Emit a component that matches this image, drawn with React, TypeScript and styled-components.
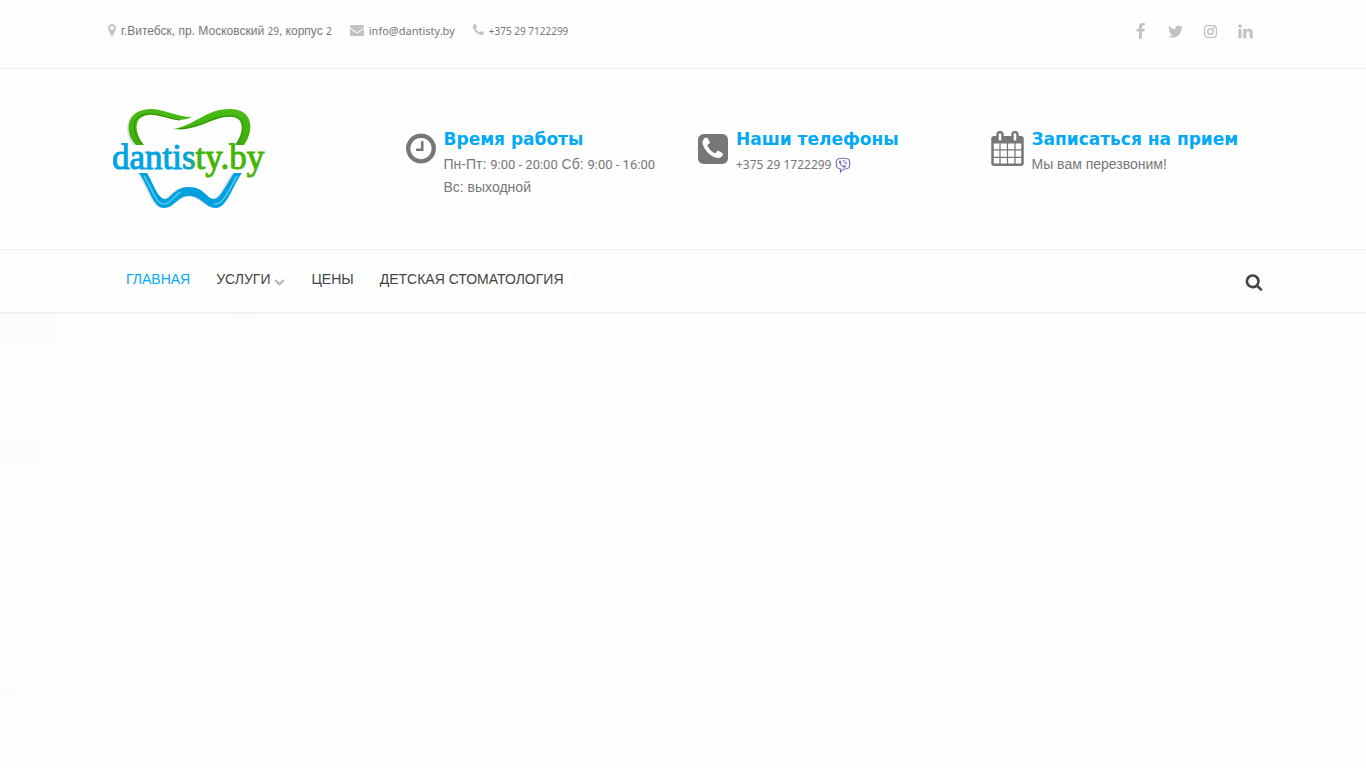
import React from 'react';
import styled, { createGlobalStyle, css } from 'styled-components';

const GlobalStyle = createGlobalStyle`
  *, *::before, *::after { box-sizing: border-box; }
  body {
    margin: 0;
    background: #fefefe;
    color: #777;
    font: 14px/23px 'Liberation Sans', Arial, sans-serif;
  }
  a { color: inherit; text-decoration: none; }
`;

const paths = {
  marker: 'M1152 640q0-106-75-181t-181-75-181 75-75 181 75 181 181 75 181-75 75-181zm256 0q0 109-33 179l-364 774q-16 33-47.5 52t-67.5 19-67.5-19-46.5-52l-365-774q-33-70-33-179 0-212 150-362t362-150 362 150 150 362z',
  envelope: 'M1792 710v794q0 66-47 113t-113 47h-1472q-66 0-113-47t-47-113v-794q44 49 101 87 362 246 497 345 57 42 92.5 65.5t94.5 48 110 24.5h2q51 0 110-24.5t94.5-48 92.5-65.5q170-123 498-345 57-39 100-87zm0-294q0 79-49 151t-122 123q-376 261-468 325-10 7-42.5 31t-54 38.5-52 32.5-57.5 27-50 9h-2q-23 0-50-9t-57.5-27-52-32.5-54-38.5-42.5-31q-91-64-262-182.5t-205-142.5q-62-42-117-115.5t-55-136.5q0-78 41.5-130t118.5-52h1472q65 0 112.5 47t47.5 113z',
  phone: 'M1600 1240q0 27-10 70.5t-21 68.5q-21 50-122 106-94 51-186 51-27 0-53-3.5t-57.5-12.5-47-14.5-55.5-20.5-49-18q-98-35-175-83-127-79-264-216t-216-264q-48-77-83-175-3-9-18-49t-20.5-55.5-14.5-47-12.5-57.5-3.5-53q0-92 51-186 56-101 106-122 25-11 68.5-21t70.5-10q14 0 21 3 18 6 53 76 11 19 30 54t35 63.5 31 53.5q3 4 17.5 25t21.5 35.5 7 28.5q0 20-28.5 50t-62 55-62 53-28.5 46q0 9 5 22.5t8.5 20.5 14 24 11.5 19q76 137 174 235t235 174q2 1 19 11.5t24 14 20.5 8.5 22.5 5q18 0 46-28.5t53-62 55-62 50-28.5q14 0 28.5 7t35.5 21.5 25 17.5q25 15 53.5 31t63.5 35 54 30q70 35 76 53 3 7 3 21z',
  clock: 'M1024 544v448q0 14-9 23t-23 9h-320q-14 0-23-9t-9-23v-64q0-14 9-23t23-9h224v-352q0-14 9-23t23-9h64q14 0 23 9t9 23zm416 352q0-148-73-273t-198-198-273-73-273 73-198 198-73 273 73 273 198 198 273 73 273-73 198-198 73-273zm224 0q0 209-103 385.5t-279.5 279.5-385.5 103-385.5-103-279.5-279.5-103-385.5 103-385.5 279.5-279.5 385.5-103 385.5 103 279.5 279.5 103 385.5z',
  calendar: 'M192 1664h288v-288h-288v288zm352 0h320v-288h-320v288zm-352-352h288v-320h-288v320zm352 0h320v-320h-320v320zm-352-384h288v-288h-288v288zm736 736h320v-288h-320v288zm-384-736h320v-288h-320v288zm768 736h288v-288h-288v288zm-384-352h320v-320h-320v320zm-352-864v-288q0-13-9.5-22.5t-22.5-9.5h-64q-13 0-22.5 9.5t-9.5 22.5v288q0 13 9.5 22.5t22.5 9.5h64q13 0 22.5-9.5t9.5-22.5zm736 864h288v-320h-288v320zm-384-384h320v-288h-320v288zm384 0h288v-288h-288v288zm32-480v-288q0-13-9.5-22.5t-22.5-9.5h-64q-13 0-22.5 9.5t-9.5 22.5v288q0 13 9.5 22.5t22.5 9.5h64q13 0 22.5-9.5t9.5-22.5zm384-64v1280q0 52-38 90t-90 38h-1408q-52 0-90-38t-38-90v-1280q0-52 38-90t90-38h128v-96q0-66 47-113t113-47h64q66 0 113 47t47 113v96h384v-96q0-66 47-113t113-47h64q66 0 113 47t47 113v96h128q52 0 90 38t38 90z',
  facebook: 'M1343 12v264h-157q-86 0-116 36t-30 108v189h293l-39 296h-254v759h-306v-759h-255v-296h255v-218q0-186 104-288.5t277-102.5q147 0 228 12z',
  twitter: 'M1684 408q-67 98-162 167 1 14 1 42 0 130-38 259.5t-115.5 248.5-184.5 210.5-258 146-323 54.5q-271 0-496-145 35 4 78 4 225 0 401-138-105-2-188-64.5t-114-159.5q33 5 61 5 43 0 85-11-112-23-185.5-111.5t-73.5-205.5v-4q68 38 146 41-66-44-105-115t-39-154q0-88 44-163 121 149 294.5 238.5t371.5 99.5q-8-38-8-74 0-134 94.5-228.5t228.5-94.5q140 0 236 102 109-21 205-78-37 115-142 178 93-10 186-50z',
  linkedin: 'M477 625v991h-330v-991h330zm21-306q1 73-50.5 122t-135.5 49h-2q-82 0-132-49t-50-122q0-74 51.5-122.5t134.5-48.5 133 48.5 51 122.5zm1166 729v568h-329v-530q0-105-40.5-164.5t-126.5-59.5q-63 0-105.5 34.5t-63.5 85.5q-11 30-11 81v553h-329q2-399 2-647t-1-296l-1-48h329v144h-2q20-32 41-56t56.5-52 87-43.5 114.5-15.5q171 0 275 113.5t104 332.5z',
  search: 'M1216 832q0-185-131.5-316.5t-316.5-131.5-316.5 131.5-131.5 316.5 131.5 316.5 316.5 131.5 316.5-131.5 131.5-316.5zm512 832q0 52-38 90t-90 38q-54 0-90-38l-343-342q-179 124-399 124-143 0-273.5-55.5t-225-150-150-225-55.5-273.5 55.5-273.5 150-225 225-150 273.5-55.5 273.5 55.5 225 150 150 225 55.5 273.5q0 220-124 399l343 343q37 37 37 90z',
  chevron: 'M1683 808l-742 741q-19 19-45 19t-45-19l-742-741q-19-19-19-45.5t19-45.5l166-165q19-19 45-19t45 19l531 531 531-531q19-19 45-19t45 19l166 165q19 19 19 45.5t-19 45.5z',
};

const Svg = styled.svg`
  display: block;
  flex: none;
  fill: currentColor;
`;

interface IconProps {
  name: keyof typeof paths;
  size: number;
  /* horizontal part of the 1792-unit grid that the glyph takes up */
  from?: number;
  span?: number;
}

const Icon = ({ name, size, from = 0, span = 1792 }: IconProps) => (
  <Svg
    viewBox={`${from} 0 ${span} 1792`}
    width={Math.round((size * span) / 1792)}
    height={size}
    aria-hidden="true"
  >
    <path d={paths[name]} />
  </Svg>
);

const InstagramIcon = () => (
  <Svg viewBox="0 0 17 17" width={17} height={17} aria-hidden="true">
    <rect x="2.6" y="2.6" width="11.800" height="11.800" rx="3.200" fill="none" stroke="currentColor" strokeWidth="1.300" />
    <circle cx="8.500" cy="8.500" r="2.800" fill="none" stroke="currentColor" strokeWidth="1.400" />
    <circle cx="12" cy="5" r="0.900" />
  </Svg>
);

const PhoneSquareIcon = () => (
  <Svg viewBox="0 -3 30 36" width={30} height={36} aria-hidden="true">
    <rect width="30" height="30" rx="5.6" />
    <path d={paths.phone} fill="#fefefe" transform="translate(1.8 1.8) scale(.01445)" />
  </Svg>
);

const ViberIcon = () => (
  <Svg viewBox="0 0 16 16" width={16} height={16} aria-hidden="true">
    <path
      d="M8 1.200c3.500 0 5 .4 5.900 1.500 1.100 1.400 1.100 6 .1 7.600-.9 1.500-2.600 1.900-5.900 1.900L5.500 15v-3.100c-2-.3-2.900-.8-3.500-1.700-1-1.500-1-6 0-7.400C2.800 1.600 4.500 1.200 8 1.200z"
      fill="none"
      stroke="#7169b3"
      strokeWidth="1.100"
    />
    <path d="M5 3.600c.8.400 1.200 1 1.300 1.700 0 .5-.6.700-.5 1.200.4 1.200 1.200 2 2.300 2.400.6.100.7-.6 1.300-.6.700.2 1.300.6 1.600 1.200-.2.800-.8 1.300-1.500 1.200C6.700 9.800 4.600 7.600 3.900 5c0-.8.500-1.200 1.100-1.400z" fill="#665cac" />
    <path d="M8 3.300c2.400.1 3.700 1.500 3.700 3.900M8.300 4.900c1.200.1 1.900.8 1.900 2" fill="none" stroke="#665cac" strokeWidth=".7" strokeLinecap="round" />
  </Svg>
);

const Container = styled.div`
  display: flex;
  width: 100%;
  max-width: 1170px;
  margin: 0 auto;
`;

const TopBar = styled.div`
  border-bottom: 1px solid #f1f1f1;
`;

const TopBarRow = styled(Container)`
  justify-content: space-between;
  padding: 20px 14px 26px 10px;
`;

const Contacts = styled.address`
  display: flex;
  gap: 18px;
  font-size: 12px;
  line-height: 22px;
  font-style: normal;
`;

const Contact = styled.span`
  display: flex;
  gap: 5px;

  svg { margin-top: 3px; color: #c2c2c2; }
`;

/* Latin letters and digits are set in another face beside the Cyrillic */
const Latin = styled.span<{ $size?: number }>`
  font-family: 'Noto Sans', 'Open Sans', sans-serif;
  font-size: ${({ $size = 11 }) => $size}px;
`;

const Hours = styled.time`
  font-family: Roboto, sans-serif;
  font-size: 13px;
`;

const Socials = styled.div`
  display: flex;
  align-items: center;
  gap: 18px;
  height: 22px;
  padding-top: 1px;
  color: #c2c2c2;
`;

const Header = styled.header`
  border-bottom: 1px solid #f1f1f1;
`;

const Column = styled.div`
  flex: 1 1 25%;
  min-width: 0;
  padding: 40px 15px;
`;

const InfoColumn = styled(Column)`
  display: flex;
  gap: 8px;
  padding: 57px 0 50px 15px;

  > svg { margin-top: 5px; }
`;

const InfoTitle = styled.h3`
  margin: 0 0 1px;
  color: #03a9f4;
  font: 700 17px/26px 'DejaVu Sans', sans-serif;
  white-space: nowrap;
`;

const InfoText = styled.p`
  display: flex;
  flex-wrap: wrap;
  gap: 0 4px;
  margin: 0;

  svg { margin-top: 4px; }
`;

const Line = styled.span`
  white-space: nowrap;
`;

const Nav = styled.nav`
  border-bottom: 2px solid #f1f1f1;
`;

const NavRow = styled(Container)`
  justify-content: space-between;
  padding: 18px 5px 21px 28px;
`;

const Menu = styled.ul`
  display: flex;
  flex-wrap: wrap;
  gap: 26px;
  margin: 0;
  padding: 0;
  list-style: none;
`;

const MenuLink = styled.a<{ $active?: boolean }>`
  display: flex;
  gap: 4px;
  color: #444;
  ${({ $active }) => $active && css`color: #03a9f4;`}

  svg { margin-top: 8px; color: #b5b5b5; }
`;

const SearchButton = styled.button`
  padding: 5px 0 0;
  border: 0;
  background: none;
  color: #444;
  cursor: pointer;
`;

/* Empty slider stage with its barely tinted blocks */
const Hero = styled.main`
  min-height: 454px;
  background:
    linear-gradient(#fcfcfc, #fcfcfc) 0 0 / 58px 32px,
    linear-gradient(#fdfdfd, #fdfdfd) 228px 0 / 28px 15px,
    linear-gradient(#fcfcfc, #fcfcfc) 0 125px / 44px 24px,
    linear-gradient(#fdfdfd, #fdfdfd) 0 252px / 28px 12px,
    linear-gradient(#fcfcfc, #fcfcfc) 0 375px / 14px 7px,
    #fefefe;
  background-repeat: no-repeat;
`;

const Logo = () => (
  <Svg viewBox="0 0 154 100" width={154} height={100} role="img" aria-label="dantisty.by">
    <defs>
      <linearGradient id="leaf" x1="0" y1="0" x2="0" y2="1">
        <stop offset="0" stopColor="#4abb14" />
        <stop offset="1" stopColor="#3dae06" />
      </linearGradient>
      <linearGradient id="word" gradientUnits="userSpaceOnUse" x1="74" y1="0" x2="86" y2="0">
        <stop offset="0" stopColor="#00a3e0" />
        <stop offset="1" stopColor="#43b50a" />
      </linearGradient>
    </defs>
    <g fill="#dfe2e4" transform="translate(-2 1)">
      <path d="M22 35C13 24 12 2 36 0h10L26 10c-4 8-1 18 5 25z" />
      <path d="M26 63h8c6 10 11 26 18 26 6 0 9-12 24-12s18 12 25 12c6 0 12-14 20-26h8c-9 12-15 35-26 35-10 0-15-12-27-12-11 0-15 12-25 12C40 98 36 77 26 63z" />
    </g>
    <path fill="url(#leaf)" d="M23 36C12 25 11 1 37 0c14 0 27 8 42 8-4 2-9 3-13 3C54 10 44 5 35 6c-16 2-13 19-4 30z" />
    <path fill="url(#leaf)" d="M60 20C82 17 92 0 117 0c23 0 25 21 14 36h-9c9-12 10-27-3-28-18-2-32 15-59 12z" />
    <path fill="none" stroke="#2f8d06" strokeWidth="1" d="M29 35C17 20 19 7 34 5c11-1 22 5 33 6M66 20c24-2 34-14 53-13 13 1 14 15 5 28" />
    <path fill="#00a0df" d="M26 64h8c6 10 11 26 18 26 6 0 9-12 24-12s18 12 25 12c6 0 12-14 20-26h8c-9 12-15 35-26 35-10 0-15-12-27-12-11 0-15 12-25 12C40 99 36 78 26 64z" />
    <path fill="none" stroke="#55c6f2" strokeWidth="1.500" d="M31 67c9 14 12 29 21 28 7-1 9-9 16-12M101 95c10 1 15-15 23-28" />
    <text x="-1" y="60" fontFamily="'Liberation Serif', serif" fontSize="35" fill="url(#word)" stroke="url(#word)" strokeWidth="1">
      dantisty.by
    </text>
  </Svg>
);

export default function App() {
  return (
    <>
      <GlobalStyle />
      <TopBar>
        <TopBarRow>
          <Contacts>
            <Contact>
              <Icon name="marker" size={14} from={384} span={1024} />
              <span>г.Витебск, пр. Московский <Latin $size={10}>29</Latin>, корпус <Latin $size={10}>2</Latin></span>
            </Contact>
            <Contact>
              <Icon name="envelope" size={14} />
              <a href="mailto:info@dantisty.by"><Latin>info@dantisty.by</Latin></a>
            </Contact>
            <Contact>
              <Icon name="phone" size={14} from={192} span={1408} />
              <a href="tel:+375297122299"><Latin $size={10}>+375 29 7122299</Latin></a>
            </Contact>
          </Contacts>
          <Socials>
            <a href="#facebook" aria-label="Facebook"><Icon name="facebook" size={17} /></a>
            <a href="#twitter" aria-label="Twitter"><Icon name="twitter" size={17} /></a>
            <a href="#instagram" aria-label="Instagram"><InstagramIcon /></a>
            <a href="#linkedin" aria-label="LinkedIn"><Icon name="linkedin" size={17} /></a>
          </Socials>
        </TopBarRow>
      </TopBar>

      <Header>
        <Container>
          <Column>
            <a href="#home"><Logo /></a>
          </Column>
          <InfoColumn>
            <Icon name="clock" size={35} from={128} span={1536} />
            <div>
              <InfoTitle>Время работы</InfoTitle>
              <InfoText>
                <Line>
                  Пн-Пт: <Hours>9:00 - 20:00</Hours> Сб: <Hours>9:00 - 16:00</Hours>
                </Line>
                <Line>Вс: выходной</Line>
              </InfoText>
            </div>
          </InfoColumn>
          <InfoColumn>
            <PhoneSquareIcon />
            <div>
              <InfoTitle>Наши телефоны</InfoTitle>
              <InfoText>
                <Latin $size={12}>+375 29 1722299</Latin>
                <ViberIcon />
              </InfoText>
            </div>
          </InfoColumn>
          <InfoColumn>
            <Icon name="calendar" size={35} from={64} span={1664} />
            <div>
              <InfoTitle>Записаться на прием</InfoTitle>
              <InfoText>Мы вам перезвоним!</InfoText>
            </div>
          </InfoColumn>
        </Container>
      </Header>

      <Nav>
        <NavRow>
          <Menu>
            <li><MenuLink href="#home" $active>ГЛАВНАЯ</MenuLink></li>
            <li><MenuLink href="#services">УСЛУГИ <Icon name="chevron" size={11} /></MenuLink></li>
            <li><MenuLink href="#prices">ЦЕНЫ</MenuLink></li>
            <li><MenuLink href="#children">ДЕТСКАЯ СТОМАТОЛОГИЯ</MenuLink></li>
          </Menu>
          <SearchButton type="button" aria-label="Поиск">
            <Icon name="search" size={18} />
          </SearchButton>
        </NavRow>
      </Nav>

      <Hero />
    </>
  );
}
